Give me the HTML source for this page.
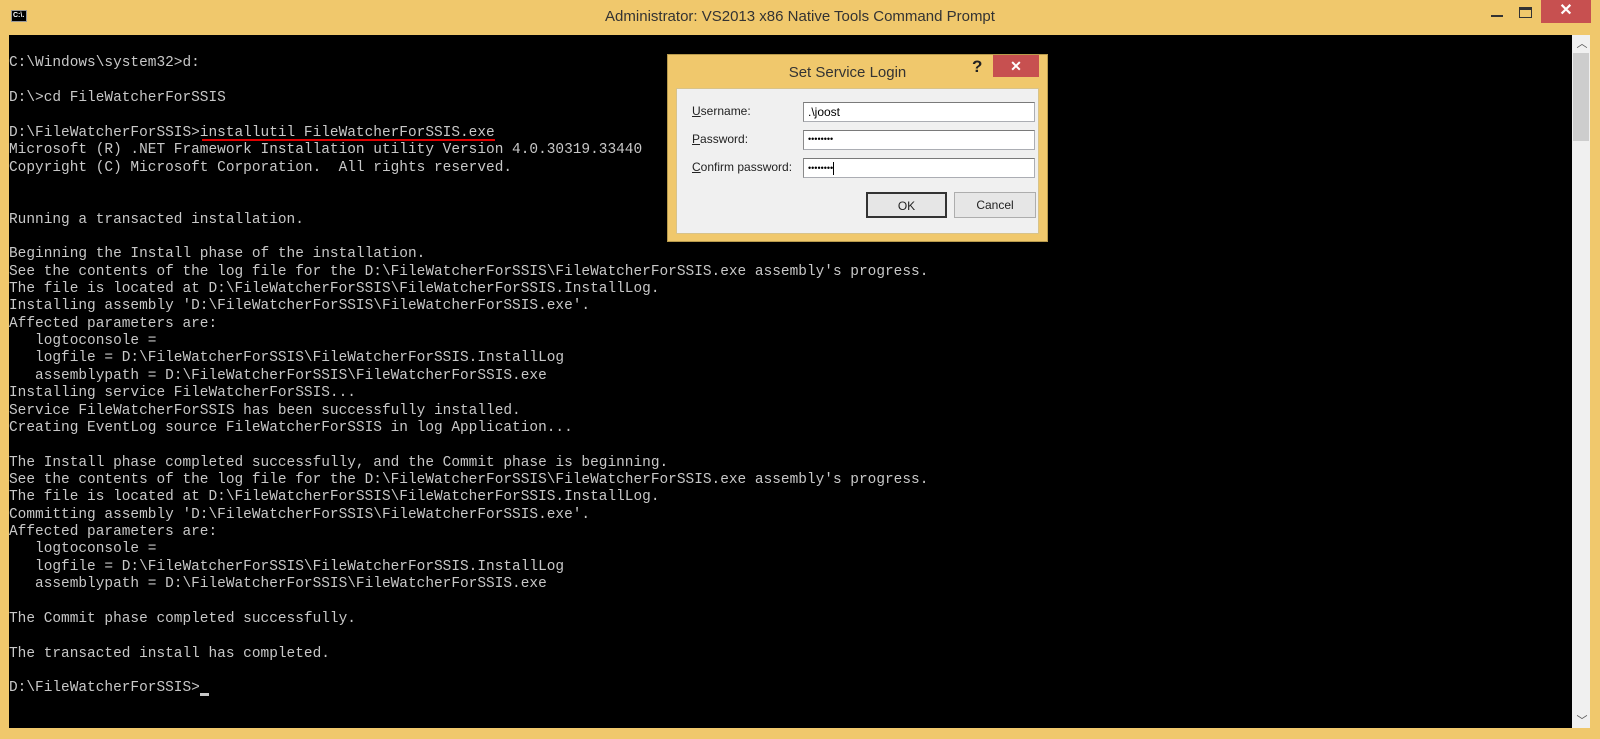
<!DOCTYPE html>
<html><head><meta charset="utf-8"><style>
*{margin:0;padding:0;box-sizing:border-box}
body{width:1600px;height:739px;background:#f0c86c;position:relative;overflow:hidden;font-family:"Liberation Sans",sans-serif}
.abs{position:absolute}
#con{left:9px;top:35px;width:1563px;height:693px;background:#000}
pre{position:absolute;left:9px;top:38px;font-family:"Liberation Mono",monospace;font-size:14.46px;line-height:17.36px;color:#c8c8c8;white-space:pre}
.lbl{position:absolute;left:692px;font-size:12px;color:#222}
.tb{position:absolute;left:803px;width:232px;height:20px;background:#fff;border:1px solid #abadb3;border-top-color:#7a7a7a;border-left-color:#8a8a8a;font-size:12px;padding:2px 4px;color:#000}
.btn{position:absolute;top:192px;height:26px;background:#e6e6e6;border:1px solid #adadad;font-size:12px;text-align:center;line-height:24px;color:#222}
</style></head><body>
<div class="abs" style="left:11px;top:10px;width:16px;height:12px;background:#000;border:1px solid #999"><div style="font-size:7px;color:#fff;line-height:10px;font-weight:bold;padding-left:1px">C:\.</div></div>
<div class="abs" style="left:0;top:8px;width:1600px;text-align:center;font-size:15px;color:#333">Administrator: VS2013 x86 Native Tools Command Prompt</div>
<div class="abs" style="left:1491px;top:15px;width:12px;height:2px;background:#333"></div>
<div class="abs" style="left:1519px;top:7px;width:13px;height:11px;border:1px solid #333;border-top:3px solid #333"></div>
<div class="abs" style="left:1541px;top:0;width:50px;height:23px;background:#c75050;color:#fff;text-align:center;font-size:16px;font-weight:bold;line-height:22px">✕</div>
<div id="con" class="abs"></div>
<div class="abs" style="left:1572px;top:35px;width:18px;height:693px;background:#f0f0f0"></div>
<div class="abs" style="left:1573px;top:53px;width:16px;height:88px;background:#cdcdcd"></div>
<div class="abs" style="left:1575px;top:35px;width:14px;text-align:center;font-size:11px;color:#555">︿</div>
<div class="abs" style="left:1575px;top:712px;width:14px;text-align:center;font-size:11px;color:#555">﹀</div>
<pre>

C:\Windows\system32>d:

D:\>cd FileWatcherForSSIS

D:\FileWatcherForSSIS>installutil FileWatcherForSSIS.exe
Microsoft (R) .NET Framework Installation utility Version 4.0.30319.33440
Copyright (C) Microsoft Corporation.  All rights reserved.


Running a transacted installation.

Beginning the Install phase of the installation.
See the contents of the log file for the D:\FileWatcherForSSIS\FileWatcherForSSIS.exe assembly's progress.
The file is located at D:\FileWatcherForSSIS\FileWatcherForSSIS.InstallLog.
Installing assembly 'D:\FileWatcherForSSIS\FileWatcherForSSIS.exe'.
Affected parameters are:
   logtoconsole =
   logfile = D:\FileWatcherForSSIS\FileWatcherForSSIS.InstallLog
   assemblypath = D:\FileWatcherForSSIS\FileWatcherForSSIS.exe
Installing service FileWatcherForSSIS...
Service FileWatcherForSSIS has been successfully installed.
Creating EventLog source FileWatcherForSSIS in log Application...

The Install phase completed successfully, and the Commit phase is beginning.
See the contents of the log file for the D:\FileWatcherForSSIS\FileWatcherForSSIS.exe assembly's progress.
The file is located at D:\FileWatcherForSSIS\FileWatcherForSSIS.InstallLog.
Committing assembly 'D:\FileWatcherForSSIS\FileWatcherForSSIS.exe'.
Affected parameters are:
   logtoconsole =
   logfile = D:\FileWatcherForSSIS\FileWatcherForSSIS.InstallLog
   assemblypath = D:\FileWatcherForSSIS\FileWatcherForSSIS.exe

The Commit phase completed successfully.

The transacted install has completed.

D:\FileWatcherForSSIS></pre>
<div class="abs" style="left:200px;top:693px;width:9px;height:3px;background:#c8c8c8"></div>
<div class="abs" style="left:202px;top:139px;width:293px;height:2px;background:#e00000"></div>
<!-- dialog -->
<div class="abs" style="left:667px;top:54px;width:381px;height:188px;background:#f0c86c;border:1px solid #b89a4c"></div>
<div class="abs" style="left:667px;top:64px;width:381px;text-align:center;font-size:15px;color:#333;padding-right:20px">Set Service Login</div>
<div class="abs" style="left:972px;top:57px;font-size:17px;font-weight:bold;color:#222">?</div>
<div class="abs" style="left:993px;top:55px;width:46px;height:22px;background:#c75050;color:#fff;text-align:center;font-size:14px;font-weight:bold;line-height:22px">✕</div>
<div class="abs" style="left:676px;top:88px;width:363px;height:146px;background:#f0f0f0;border:1px solid #d8c38a"></div>
<div class="lbl" style="top:104px"><u>U</u>sername:</div>
<div class="lbl" style="top:132px"><u>P</u>assword:</div>
<div class="lbl" style="top:160px"><u>C</u>onfirm password:</div>
<div class="tb" style="top:102px">.\joost</div>
<div class="tb" style="top:130px;font-size:9px;padding-top:3px">••••••••</div>
<div class="tb" style="top:158px;font-size:9px;padding-top:3px">••••••••<span style="display:inline-block;width:1px;height:13px;background:#000;vertical-align:middle"></span></div>
<div class="btn" style="left:866px;width:81px;border:2px solid #333">OK</div>
<div class="btn" style="left:954px;width:82px">Cancel</div>
</body></html>
